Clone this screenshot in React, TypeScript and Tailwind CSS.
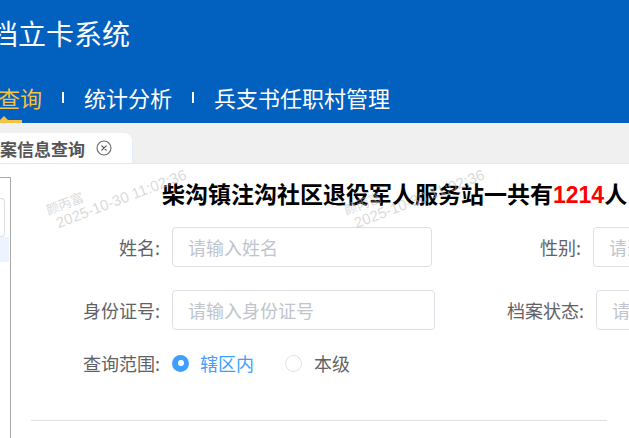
import React from "react";

function Watermark({ left }: { left: number }) {
  return (
    <div
      className="absolute pointer-events-none select-none whitespace-nowrap text-[rgba(185,185,185,0.55)] [font-family:'Liberation_Sans','Noto_Sans_CJK_SC',sans-serif] origin-bottom-left rotate-[-21deg] top-[199px]"
      style={{ left }}
    >
      <div className="text-[13px] leading-[15px] [font-family:'Noto_Sans_CJK_SC',sans-serif] ml-[-5px]">颜丙富</div>
      <div className="text-[15px] leading-[18px]">2025-10-30 11:02:36</div>
    </div>
  );
}

function CloseIcon() {
  return (
    <svg width="16" height="16" viewBox="0 0 16 16" className="shrink-0">
      <circle cx="8" cy="8" r="7" fill="none" stroke="#666" strokeWidth="1.1" />
      <path d="M5.8 5.8 L10.2 10.2 M10.2 5.8 L5.8 10.2" stroke="#555" strokeWidth="1.2" strokeLinecap="round" />
    </svg>
  );
}

function Input({ placeholder, w }: { placeholder: string; w: number }) {
  return (
    <div
      className="ml-[12px] h-[40px] shrink-0 border border-[#dcdfe6] rounded-[4px] pl-[15px] flex items-center text-[18px] text-[#c0c4cc] whitespace-nowrap overflow-hidden"
      style={{ width: w }}
    >
      {placeholder}
    </div>
  );
}

export default function App() {
  return (
    <div className="relative w-[629px] h-[438px] overflow-hidden bg-white [font-family:'Noto_Sans_CJK_SC','Noto_Sans',sans-serif]">
      {/* Header */}
      <header className="relative h-[123px] bg-[#0260bf] text-white flex flex-col">
        <div className="h-[66px] flex items-center ml-[-150px] text-[28px] leading-none whitespace-nowrap">
          退役军人建档立卡系统
        </div>
        <nav className="h-[57px] pt-[5px] flex items-center ml-[-46px] text-[22px] leading-none whitespace-nowrap">
          <span className="text-[#f7c242]">档案查询</span>
          <span className="mx-[20px] w-[2px] h-[11px] bg-white" />
          <span>统计分析</span>
          <span className="mx-[20px] w-[2px] h-[11px] bg-white" />
          <span>兵支书任职村管理</span>
        </nav>
        <div className="absolute left-[-26px] top-[120px] w-[48px] h-[3px] bg-[#f7c242]" />
        <div className="absolute left-[0px] top-[116px] w-0 h-0 border-l-[4px] border-r-[4px] border-b-[4px] border-l-transparent border-r-transparent border-b-[#f7c242]" />
      </header>

      {/* Tab bar */}
      <div className="h-[40px] bg-[#f0f0f0] flex items-end">
        <div className="h-[30px] ml-[-30px] pl-[13px] pr-[20px] bg-white rounded-tr-[8px] border-r border-[#e4edf9] flex items-center">
          <span className="text-[17px] font-bold text-[#555] leading-none whitespace-nowrap">档案信息查询</span>
          <span className="ml-[11px]">
            <CloseIcon />
          </span>
        </div>
      </div>

      {/* Content */}
      <div className="flex h-[275px] border-t border-[#e8e8e8]">
        <div className="w-[11px] shrink-0 pt-[13px]">
          <div className="h-full border-t border-r border-[#aaaaaa]">
            <div className="mt-[20px] h-[39px] w-[5px] border border-l-0 border-[#dcdfe6] rounded-r-[4px]" />
            <div className="h-[25px] w-[9px] bg-[#ecf5ff]" />
          </div>
        </div>

        <div className="flex-1 pl-[20px] pt-[13px] text-[#606266]">
          <div className="ml-[131px] h-[32px] leading-[32px] text-[23px] font-bold text-black whitespace-nowrap">
            柴沟镇注沟社区退役军人服务站一共有<span className="text-[#ff0000] [font-family:'Liberation_Sans',sans-serif]">1214</span>人
          </div>

          <div className="mt-[18px] flex items-center h-[40px] text-[18px]">
            <div className="w-[129px] shrink-0 text-right">姓名:</div>
            <Input placeholder="请输入姓名" w={260} />
            <div className="w-[149px] shrink-0 text-right">性别:</div>
            <Input placeholder="请选择" w={200} />
          </div>

          <div className="mt-[23px] flex items-center h-[40px] text-[18px]">
            <div className="w-[129px] shrink-0 text-right">身份证号:</div>
            <Input placeholder="请输入身份证号" w={263} />
            <div className="w-[149px] shrink-0 text-right">档案状态:</div>
            <Input placeholder="请选择" w={200} />
          </div>

          <div className="mt-[13px] flex items-center h-[40px] text-[18px]">
            <div className="w-[129px] shrink-0 text-right">查询范围:</div>
            <div className="ml-[12px] w-[17px] h-[17px] rounded-full bg-[#409eff] flex items-center justify-center shrink-0">
              <div className="w-[6px] h-[6px] rounded-full bg-white" />
            </div>
            <span className="ml-[11px] text-[#409eff]">辖区内</span>
            <div className="ml-[31px] w-[17px] h-[17px] rounded-full border border-[#dcdfe6] bg-white shrink-0" />
            <span className="ml-[12px]">本级</span>
          </div>

          <div className="mt-[37px] h-[1px] w-[576px] bg-[#dcdfe6]" />
        </div>
      </div>

      <Watermark left={60} />
      <Watermark left={358} />
    </div>
  );
}
